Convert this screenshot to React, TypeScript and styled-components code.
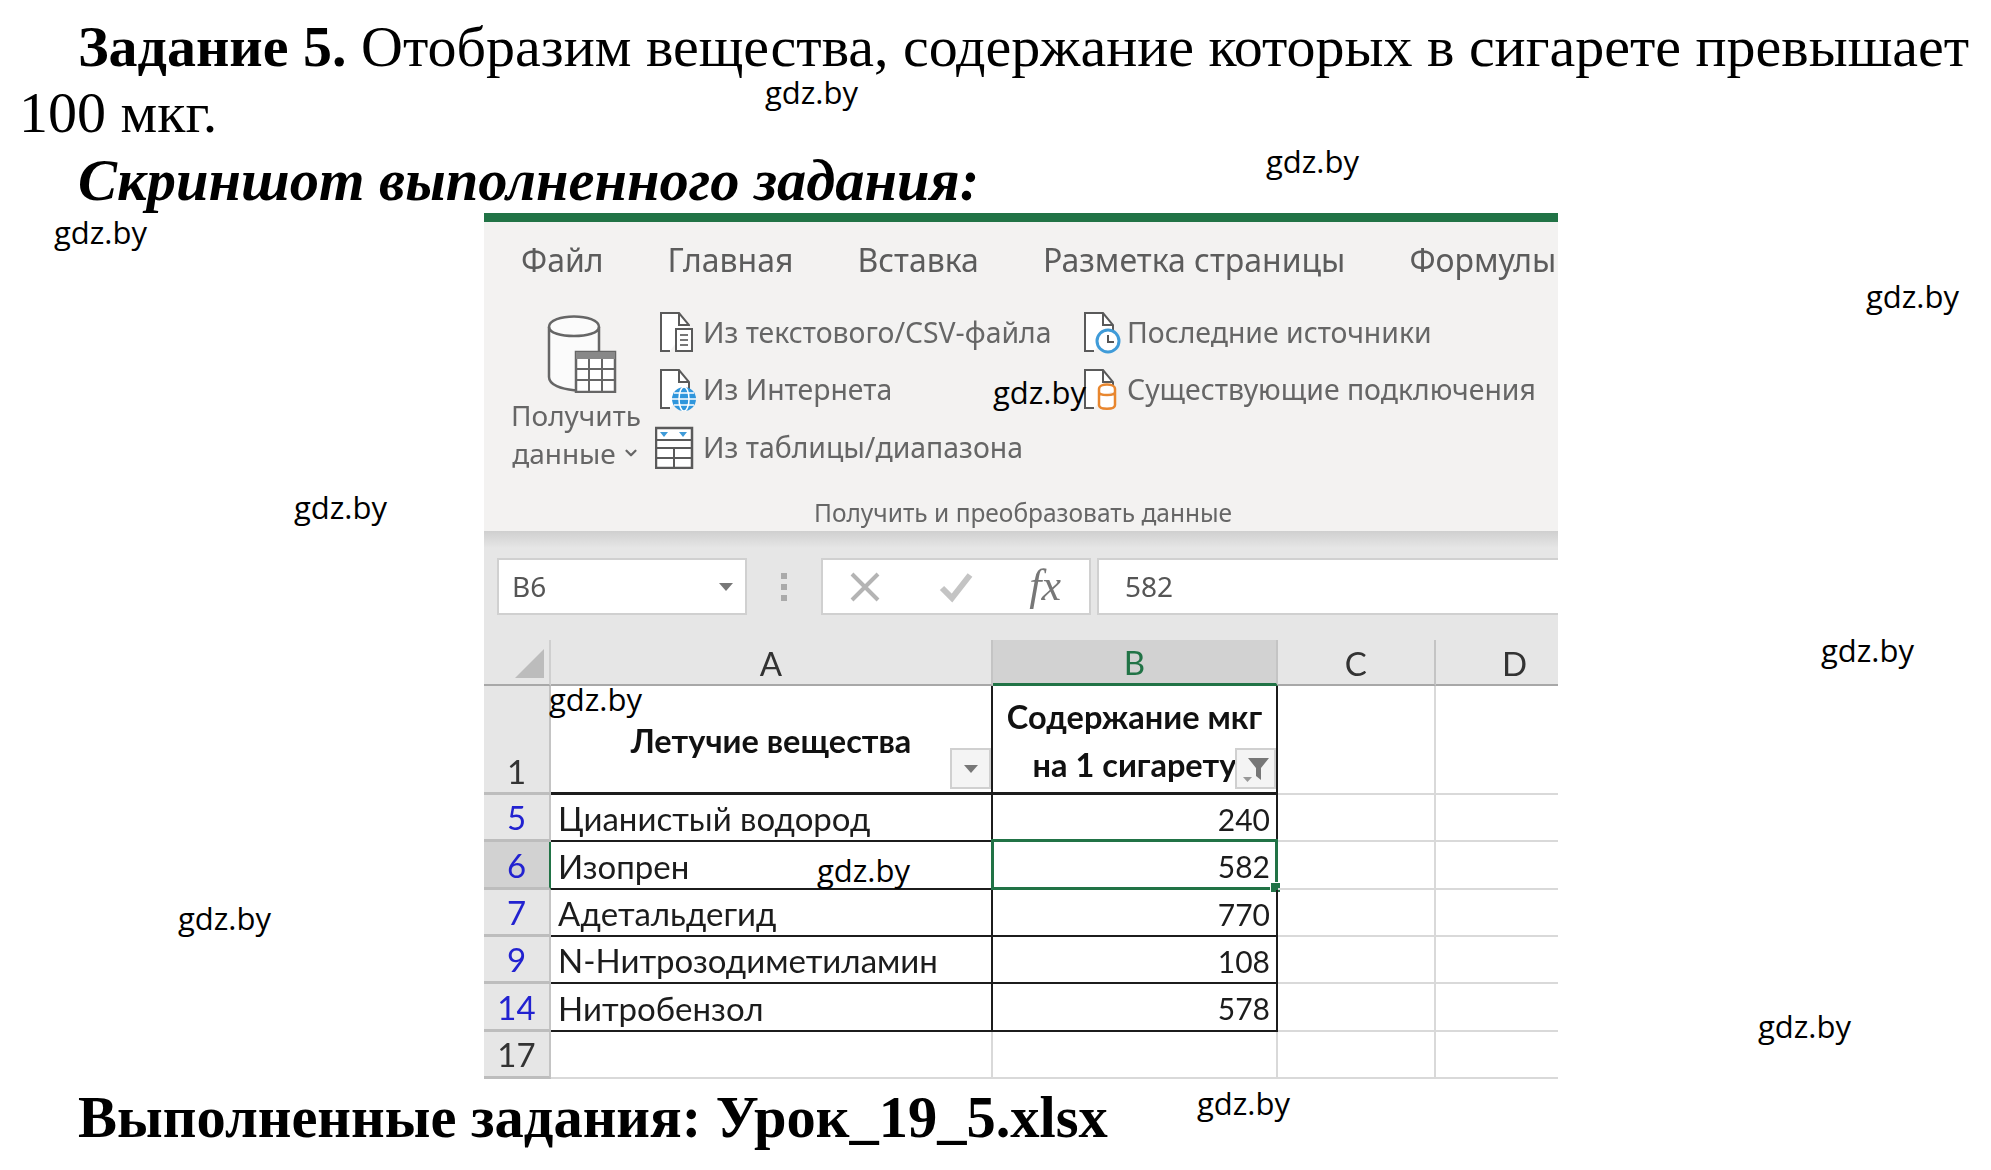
import styled, { createGlobalStyle } from 'styled-components';
import { ChevronDown } from 'lucide-react';

const GlobalStyle = createGlobalStyle`
  html, body {
    margin: 0;
    padding: 0;
    background: #fff;
  }
`;

const Page = styled.div`
  position: relative;
  width: 1991px;
  height: 1170px;
  overflow: hidden;
  background: #fff;
  color: #000;
  font-family: 'Liberation Serif', 'Times New Roman', serif;
  font-size: 58.5px;
  line-height: 66px;
`;

const Task = styled.div`
  padding: 14px 0 0 19px;
  font-size: 58px;
  white-space: nowrap;
`;

const TaskLine = styled.div<{ $first?: boolean }>`
  padding-left: ${(p) => (p.$first ? '59px' : '0')};
`;

const Subtitle = styled.h2`
  margin: 2px 0 0 78px;
  font-size: inherit;
  font-weight: 700;
  font-style: italic;
  line-height: inherit;
`;

const Footer = styled.h2`
  margin: 6px 0 0 78px;
  font-size: inherit;
  font-weight: 700;
  line-height: inherit;
`;

const Shot = styled.div`
  width: 1074px;
  height: 866px;
  margin: -1px 0 0 484px;
  overflow: hidden;
  border-top: 9px solid #217346;
  box-sizing: border-box;
  font-family: 'Noto Sans', 'Open Sans', sans-serif;
  line-height: 1.2;
  filter: blur(0.5px);
`;

const Ribbon = styled.div`
  height: 309px;
  background: #f3f2f1;
  color: #666;
`;

const Tabs = styled.div`
  display: flex;
  align-items: center;
  gap: 64px;
  height: 76px;
  padding-left: 37px;
  font-size: 32px;
  line-height: 40px;
  color: #5c5c5c;
  white-space: nowrap;
`;

const RibbonBody = styled.div`
  display: flex;
  height: 192px;
  padding-top: 5px;
  box-sizing: border-box;
`;

const LargeButton = styled.div`
  display: flex;
  flex-direction: column;
  align-items: center;
  box-sizing: border-box;
  width: 171px;
  padding: 12px 0 0 13px;
  font-size: 28px;
  line-height: 38px;
`;

const LargeIcon = styled.svg`
  width: 70px;
  height: 78px;
  margin: 0 0 3px 12px;
`;

const CaretLine = styled.span`
  display: flex;
  align-items: center;
  gap: 6px;
`;

const CommandColumn = styled.div`
  display: flex;
  flex-direction: column;
  width: 424px;
`;

const Command = styled.div`
  display: flex;
  align-items: center;
  height: 57.5px;
  font-size: 28.4px;
  white-space: nowrap;
`;

const CommandIcon = styled.svg`
  flex: none;
  width: 48px;
  height: 44px;
`;

const GroupLabel = styled.div`
  height: 41px;
  padding-left: 4px;
  text-align: center;
  font-size: 24.5px;
  line-height: 45px;
  color: #666;
`;

const FormulaBar = styled.div`
  display: flex;
  align-items: flex-start;
  box-sizing: border-box;
  height: 109px;
  padding: 27px 0 0 13px;
  background: linear-gradient(#cfcfcf 0, #e6e6e6 17px);
`;

const FieldBox = styled.div<{ $width: number }>`
  display: flex;
  align-items: center;
  flex: none;
  box-sizing: border-box;
  width: ${(p) => p.$width}px;
  height: 57px;
  background: #fff;
  border: 2px solid #d0d0d0;
  color: #555;
  font-size: 28px;
`;

const NameBox = styled(FieldBox)`
  justify-content: space-between;
  padding: 0 12px 0 13px;
`;

const DownArrow = styled.span`
  width: 0;
  height: 0;
  border-left: 7px solid transparent;
  border-right: 7px solid transparent;
  border-top: 8px solid #777;
`;

const Grip = styled.div`
  display: flex;
  flex-direction: column;
  gap: 5px;
  flex: none;
  justify-content: center;
  align-items: center;
  width: 74px;
  height: 57px;

  span {
    width: 6px;
    height: 6px;
    background: #aaa;
  }
`;

const FxBox = styled(FieldBox)`
  justify-content: space-between;
  padding: 0 28px 0 24px;
  margin-right: 6px;
`;

const FxMark = styled.span`
  font-family: 'Liberation Serif', serif;
  font-style: italic;
  font-size: 44px;
  color: #777;
`;

const ToolIcon = styled.svg`
  width: 36px;
  height: 36px;
`;

const FormulaInput = styled(FieldBox)`
  padding-left: 26px;
  border-right: none;
`;

const Sheet = styled.div`
  display: grid;
  grid-template-columns: 67px 442px 285px 157.5px 160px;
  grid-template-rows: 46px 109px repeat(6, 47.33px);
  background: #fff;
  font-family: 'Lato', 'Open Sans', sans-serif;
  font-size: 30px;
  color: #1c1c1c;
`;

const Corner = styled.div`
  position: relative;
  background: #e6e6e6;
  border-right: 2px solid #cfcfcf;
  border-bottom: 2px solid #a8a8a8;
  box-sizing: border-box;

  &::after {
    content: '';
    position: absolute;
    right: 5px;
    bottom: 6px;
    border-style: solid;
    border-width: 0 0 29px 29px;
    border-color: transparent transparent #bcbcbc transparent;
  }
`;

const ColHead = styled.div<{ $active?: boolean }>`
  display: flex;
  align-items: center;
  justify-content: center;
  box-sizing: border-box;
  padding-top: 3px;
  background: ${(p) => (p.$active ? '#d2d2d2' : '#e6e6e6')};
  border-right: 2px solid #c4c4c4;
  border-bottom: ${(p) => (p.$active ? '3px solid #217346' : '2px solid #a8a8a8')};
  color: ${(p) => (p.$active ? '#217346' : '#333')};
  font-size: 33px;
`;

const RowHead = styled.div<{ $filtered?: boolean; $active?: boolean; $tall?: boolean }>`
  display: flex;
  align-items: ${(p) => (p.$tall ? 'flex-end' : 'center')};
  justify-content: center;
  box-sizing: border-box;
  padding-top: ${(p) => (p.$tall ? '0' : '2px')};
  background: ${(p) => (p.$active ? '#d2d2d2' : '#e6e6e6')};
  border-right: 2px solid ${(p) => (p.$active ? '#217346' : '#c4c4c4')};
  border-bottom: 3px solid #bdbdbd;
  color: ${(p) => (p.$filtered ? '#2222d0' : '#333')};
  font-size: 33px;
`;

const Cell = styled.div<{ $edge?: 'table' | 'grid'; $right?: boolean; $heavy?: boolean }>`
  position: relative;
  display: flex;
  align-items: center;
  justify-content: ${(p) => (p.$right ? 'flex-end' : 'flex-start')};
  box-sizing: border-box;
  padding: 3px ${(p) => (p.$right ? '6px' : '0')} 0 ${(p) => (p.$right ? '0' : '7px')};
  border-right: 2px solid ${(p) => (p.$edge === 'table' ? '#1c1c1c' : '#d9d9d9')};
  border-bottom: ${(p) => (p.$heavy ? 3 : 2)}px solid ${(p) => (p.$edge === 'table' ? '#1c1c1c' : '#d9d9d9')};
`;

const NameCell = styled(Cell)`
  font-size: 33px;
`;

const HeaderCell = styled(Cell)`
  flex-direction: column;
  justify-content: center;
  padding: 4px 0 0;
  font-weight: 700;
  font-size: 32.5px;
  line-height: 48px;
  color: #111;
`;

const SideLine = styled.span`
  display: block;
  width: 100%;
  text-align: center;
`;

const FilterButton = styled.span`
  position: absolute;
  right: 0;
  bottom: 3px;
  display: flex;
  align-items: center;
  justify-content: center;
  box-sizing: border-box;
  width: 41px;
  height: 41px;
  background: #f4f4f4;
  border: 2px solid #d0d0d0;
`;

const Selection = styled.span`
  position: absolute;
  inset: -3px -2px -2px -2px;
  border: 3px solid #217346;
`;

const Handle = styled.span`
  position: absolute;
  right: -6px;
  bottom: -6px;
  width: 9px;
  height: 9px;
  background: #217346;
  border: 1px solid #fff;
`;

const Stamp = styled.span<{ $left: number; $top: number }>`
  position: absolute;
  left: ${(p) => p.$left}px;
  top: ${(p) => p.$top}px;
  font-family: 'Open Sans', 'Liberation Sans', sans-serif;
  font-size: 31px;
  line-height: 40px;
  color: #000;
`;

const stamps = [
  [765, 72],
  [1266, 141],
  [54, 212],
  [1866, 276],
  [993, 372],
  [294, 487],
  [1821, 630],
  [549, 679],
  [817, 850],
  [178, 898],
  [1758, 1006],
  [1197, 1083],
];

const rows = [
  { no: '5', name: 'Цианистый водород', value: '240' },
  { no: '6', name: 'Изопрен', value: '582', active: true },
  { no: '7', name: 'Адетальдегид', value: '770' },
  { no: '9', name: 'N-Нитрозодиметиламин', value: '108' },
  { no: '14', name: 'Нитробензол', value: '578' },
];

const DocShape = ({ short }: { short?: boolean }) => (
  <path
    d={short ? 'M15 41H6V3H24L34 15V22' : 'M15 41H6V3H24L34 15V16'}
    fill="#fff"
    stroke="#5a5a5a"
    strokeWidth="2"
  />
);

const TextFileIcon = () => (
  <CommandIcon viewBox="0 0 48 44">
    <DocShape />
    <path d="M24 3V15H34" fill="none" stroke="#5a5a5a" strokeWidth="2" />
    <rect x="21" y="19" width="16" height="22" fill="#fff" stroke="#5a5a5a" strokeWidth="2" />
    <path d="M25 25H33M25 30H33M25 35H33" stroke="#777" strokeWidth="2" />
  </CommandIcon>
);

const WebIcon = () => (
  <CommandIcon viewBox="0 0 48 44">
    <DocShape short />
    <path d="M24 3V15H34" fill="none" stroke="#5a5a5a" strokeWidth="2" />
    <circle cx="29" cy="32" r="12" fill="#2f96dc" />
    <path d="M17 32H41M19 26H39M19 38H39" stroke="#fff" strokeWidth="1.5" />
    <ellipse cx="29" cy="32" rx="5" ry="12" fill="none" stroke="#fff" strokeWidth="1.5" />
  </CommandIcon>
);

const TableIcon = () => (
  <CommandIcon viewBox="0 0 48 44">
    <rect x="1" y="3" width="36" height="40" fill="#fff" stroke="#5a5a5a" strokeWidth="2.5" />
    <path d="M1 15H37M1 23H37M1 33H37M19 23V43" stroke="#5a5a5a" strokeWidth="2" />
    <path d="M5 7H13L9 12ZM24 7H32L28 12Z" fill="#3f9bd8" />
  </CommandIcon>
);

const RecentIcon = () => (
  <CommandIcon viewBox="0 0 48 44">
    <DocShape short />
    <path d="M24 3V15H34" fill="none" stroke="#5a5a5a" strokeWidth="2" />
    <circle cx="29" cy="31" r="11" fill="#fff" stroke="#3f9bd8" strokeWidth="3" />
    <path d="M29 25V32H35" fill="none" stroke="#555" strokeWidth="2" />
  </CommandIcon>
);

const ConnectionIcon = () => (
  <CommandIcon viewBox="0 0 48 44">
    <DocShape short />
    <path d="M24 3V15H34" fill="none" stroke="#5a5a5a" strokeWidth="2" />
    <path
      d="M20 22C20 16 36 16 36 22V38C36 43 20 43 20 38ZM20 25C20 29 36 29 36 25"
      fill="#fff"
      stroke="#e8862e"
      strokeWidth="2.5"
    />
  </CommandIcon>
);

const DataIcon = () => (
  <LargeIcon viewBox="0 0 70 78">
    <path
      d="M2 12C2 -2 52 -2 52 12V72C52 78 2 78 2 62Z"
      fill="#fbfbfb"
      stroke="#666"
      strokeWidth="2.5"
    />
    <path d="M2 12C2 24 52 24 52 12" fill="none" stroke="#666" strokeWidth="2.5" />
    <rect x="29" y="37" width="39" height="40" fill="#fff" stroke="#666" strokeWidth="2.5" />
    <rect x="29" y="37" width="39" height="7" fill="#888" />
    <path d="M29 54H68M29 65H68M42 44V77M55 44V77" stroke="#666" strokeWidth="2" />
  </LargeIcon>
);

const CancelIcon = () => (
  <ToolIcon viewBox="0 0 36 36">
    <path d="M5 5L31 31M31 5L5 31" stroke="#b4b4b4" strokeWidth="4" />
  </ToolIcon>
);

const ConfirmIcon = () => (
  <ToolIcon viewBox="0 0 36 36">
    <path d="M4 19L14 29L32 6" fill="none" stroke="#c4c4c4" strokeWidth="6" />
  </ToolIcon>
);

const FunnelIcon = () => (
  <svg width="30" height="30" viewBox="0 0 30 30">
    <path d="M7 4H28L20 14V26L15 22V14Z" fill="#777" />
    <path d="M2 23H11L6.5 28Z" fill="#999" />
  </svg>
);

const DataRow = ({ no, name, value, active }: { no: string; name: string; value: string; active?: boolean }) => (
  <>
    <RowHead $filtered $active={active}>
      {no}
    </RowHead>
    <NameCell $edge="table">{name}</NameCell>
    <Cell $edge="table" $right>
      {value}
      {active && (
        <Selection>
          <Handle />
        </Selection>
      )}
    </Cell>
    <Cell />
    <Cell />
  </>
);

const App = () => {
  return (
    <Page>
      <GlobalStyle />
      <Task>
        <TaskLine $first>
          <b>Задание 5.</b> Отобразим вещества, содержание которых в сигарете превышает
        </TaskLine>
        <TaskLine>100 мкг.</TaskLine>
      </Task>
      <Subtitle>Скриншот выполненного задания:</Subtitle>
      <Shot>
        <Ribbon>
          <Tabs>
            <span>Файл</span>
            <span>Главная</span>
            <span>Вставка</span>
            <span>Разметка страницы</span>
            <span>Формулы</span>
          </Tabs>
          <RibbonBody>
            <LargeButton>
              <DataIcon />
              <span>Получить</span>
              <CaretLine>
                данные
                <ChevronDown size={18} strokeWidth={3} />
              </CaretLine>
            </LargeButton>
            <CommandColumn>
              <Command>
                <TextFileIcon />
                Из текстового/CSV-файла
              </Command>
              <Command>
                <WebIcon />
                Из Интернета
              </Command>
              <Command>
                <TableIcon />
                Из таблицы/диапазона
              </Command>
            </CommandColumn>
            <CommandColumn>
              <Command>
                <RecentIcon />
                Последние источники
              </Command>
              <Command>
                <ConnectionIcon />
                Существующие подключения
              </Command>
            </CommandColumn>
          </RibbonBody>
          <GroupLabel>Получить и преобразовать данные</GroupLabel>
        </Ribbon>
        <FormulaBar>
          <NameBox $width={250}>
            B6
            <DownArrow />
          </NameBox>
          <Grip>
            <span />
            <span />
            <span />
          </Grip>
          <FxBox $width={270}>
            <CancelIcon />
            <ConfirmIcon />
            <FxMark>fx</FxMark>
          </FxBox>
          <FormulaInput $width={470}>582</FormulaInput>
        </FormulaBar>
        <Sheet>
          <Corner />
          <ColHead>A</ColHead>
          <ColHead $active>B</ColHead>
          <ColHead>C</ColHead>
          <ColHead>D</ColHead>

          <RowHead $tall>1</RowHead>
          <HeaderCell $heavy $edge="table">
            <SideLine>Летучие вещества</SideLine>
            <FilterButton>
              <DownArrow />
            </FilterButton>
          </HeaderCell>
          <HeaderCell $heavy $edge="table">
            <SideLine>Содержание мкг</SideLine>
            <SideLine>на 1 сигарету</SideLine>
            <FilterButton>
              <FunnelIcon />
            </FilterButton>
          </HeaderCell>
          <Cell />
          <Cell />

          {rows.map((row) => (
            <DataRow key={row.no} {...row} />
          ))}

          <RowHead>17</RowHead>
          <Cell />
          <Cell />
          <Cell />
          <Cell />
        </Sheet>
      </Shot>
      <Footer>Выполненные задания: Урок_19_5.xlsx</Footer>
      {stamps.map(([left, top]) => (
        <Stamp key={left} $left={left} $top={top}>
          gdz.by
        </Stamp>
      ))}
    </Page>
  );
};

export default App;
